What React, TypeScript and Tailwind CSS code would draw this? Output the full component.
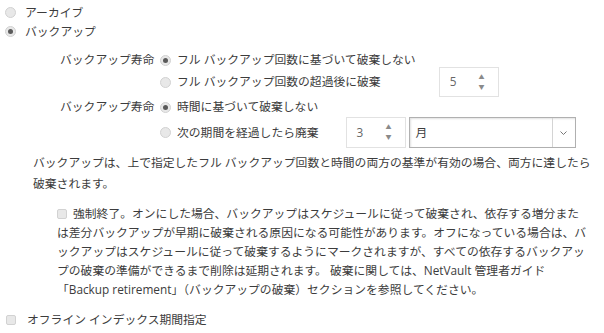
import React from "react";

function Radio({ checked = false }: { checked?: boolean }) {
  return (
    <span className="flex h-[11px] w-[11px] shrink-0 items-center justify-center rounded-full border border-[#d2d2d2] bg-[#e8e8e8]">
      {checked && <span className="h-[5px] w-[5px] rounded-full bg-[#5a5a5a]" />}
    </span>
  );
}

function Checkbox() {
  return <span className="inline-block h-[10px] w-[10px] shrink-0 rounded-[2px] border border-[#d2d2d2] bg-[#e8e8e8] align-[-1px]" />;
}

function Spinner({ value }: { value: string }) {
  return (
    <div className="flex h-full w-[60px] items-center justify-between border border-[#e2e2e2] bg-white pl-[10px] pr-[13px]">
      <span className="text-[#666]">{value}</span>
      <span className="flex flex-col items-center gap-[3px] text-[6px] leading-[7px] text-[#8a8a8a]">
        <span>▲</span>
        <span>▼</span>
      </span>
    </div>
  );
}

export default function App() {
  return (
    <div
      className="h-[333px] w-[604px] overflow-hidden bg-white text-[11.8px] text-[#3c3c3c]"
      style={{ fontFamily: '"Open Sans", "Noto Sans CJK JP", sans-serif' }}
    >
      {/* top radio group */}
      <div className="pt-[3px] pl-[5px]">
        <label className="flex h-[19px] items-center gap-[9px]">
          <Radio />
          <span>アーカイブ</span>
        </label>
        <label className="flex h-[19px] items-center gap-[9px]">
          <Radio checked />
          <span>バックアップ</span>
        </label>
      </div>

      {/* full backup count */}
      <div className="mt-[10px] flex pl-[60px]">
        <div className="flex h-[18px] w-[100px] items-center">バックアップ寿命</div>
        <div className="flex flex-col">
          <label className="flex h-[18px] items-center gap-[6px]">
            <Radio checked />
            <span>フル バックアップ回数に基づいて破棄しない</span>
          </label>
          <div className="-mt-[2px] flex h-[30px] items-center gap-[6px]">
            <Radio />
            <span>フル バックアップ回数の超過後に破棄</span>
            <div className="ml-[52px] h-[30px]">
              <Spinner value="5" />
            </div>
          </div>
        </div>
      </div>

      {/* time based */}
      <div className="mt-[1px] flex pl-[60px]">
        <div className="flex h-[18px] w-[100px] items-center">バックアップ寿命</div>
        <div className="flex flex-col">
          <label className="flex h-[18px] items-center gap-[6px]">
            <Radio checked />
            <span>時間に基づいて破棄しない</span>
          </label>
          <div className="mt-[1px] flex h-[31px] items-center gap-[6px]">
            <Radio />
            <span>次の期間を経過したら廃棄</span>
            <div className="ml-[21px] flex h-[31px] gap-[3px]">
              <Spinner value="3" />
              <div className="flex w-[167px] border border-[#b0b0b0] bg-white shadow-[inset_1px_1px_2px_rgba(0,0,0,0.12)]">
                <span className="flex flex-1 items-center pl-[6px]">月</span>
                <span className="flex w-[23px] items-center justify-center border-l border-[#d4d4d4]">
                  <svg width="7" height="4" viewBox="0 0 7 4" fill="none" stroke="#777" strokeWidth="1">
                    <path d="M0.5 0.5 L3.5 3.5 L6.5 0.5" />
                  </svg>
                </span>
              </div>
            </div>
          </div>
        </div>
      </div>

      <p className="mt-[4px] pl-[33px] leading-[21px]">
        バックアップは、上で指定したフル バックアップ回数と時間の両方の基準が有効の場合、両方に達したら
        <br />
        破棄されます。
      </p>

      <p className="mt-[10px] whitespace-nowrap pl-[57px] leading-[19px]">
        <Checkbox />
        <span className="ml-[6px]">強制終了。オンにした場合、バックアップはスケジュールに従って破棄され、依存する増分また</span>
        <br />
        は差分バックアップが早期に破棄される原因になる可能性があります。オフになっている場合は、バ
        <br />
        ックアップはスケジュールに従って破棄するようにマークされますが、すべての依存するバックアッ
        <br />
        プの破棄の準備ができるまで削除は延期されます。 破棄に関しては、NetVault 管理者ガイド
        <br />
        「Backup retirement」（バックアップの破棄）セクションを参照してください。
      </p>

      <label className="mt-[11px] flex h-[19px] items-center gap-[11px] pl-[6px]">
        <Checkbox />
        <span>オフライン インデックス期間指定</span>
      </label>
    </div>
  );
}
